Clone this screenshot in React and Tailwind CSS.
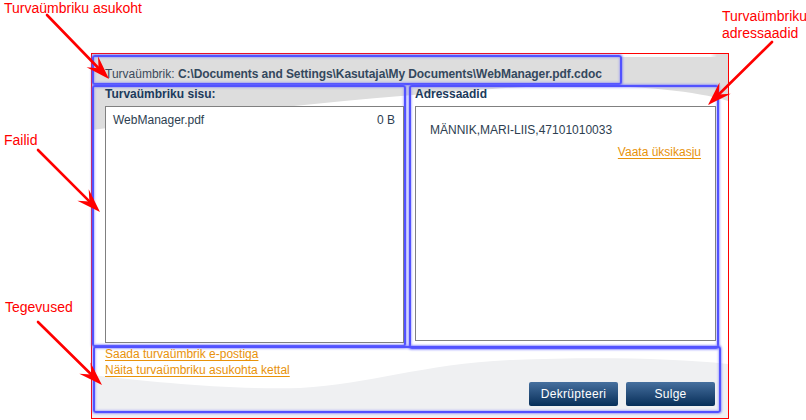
import React from "react";

const glow =
  "border-2 border-[#5252ff] rounded-[3px] shadow-[0_0_2px_1px_rgba(110,110,255,0.6),inset_0_0_2px_1px_rgba(110,110,255,0.45)]";

function Arrow({ x1, y1, x2, y2 }) {
  const dx = x2 - x1;
  const dy = y2 - y1;
  const len = Math.hypot(dx, dy);
  const ux = dx / len;
  const uy = dy / len;
  const px = -uy;
  const py = ux;
  const L = 24;
  const W = 8;
  const N = 15;
  const bx = x2 - L * ux;
  const by = y2 - L * uy;
  const nx = x2 - N * ux;
  const ny = y2 - N * uy;
  const pts = [
    [x2, y2],
    [bx + W * px, by + W * py],
    [nx, ny],
    [bx - W * px, by - W * py],
  ]
    .map((p) => p.join(","))
    .join(" ");
  return (
    <g>
      <line x1={x1} y1={y1} x2={nx} y2={ny} stroke="#ff0000" strokeWidth="2.6" strokeLinecap="round" />
      <polygon points={pts} fill="#ff0000" />
    </g>
  );
}

export default function App() {
  return (
    <div
      className="relative w-[806px] h-[420px] bg-white overflow-hidden text-[12px] leading-[14px]"
      style={{ fontFamily: '"Liberation Sans", Arial, sans-serif' }}
    >
      {/* dialog frame */}
      <div className="ml-[91px] pt-[53px]">
        <div className="relative w-[638px] h-[366px] border border-[#ff0000] bg-white">
          <svg className="absolute inset-0" width="636" height="364" viewBox="0 0 636 364">
            <defs>
              <linearGradient id="topband" x1="0" y1="0" x2="1" y2="0">
                <stop offset="0" stopColor="#ffffff" stopOpacity="0" />
                <stop offset="0.5" stopColor="#ffffff" stopOpacity="0.9" />
                <stop offset="0.98" stopColor="#ffffff" stopOpacity="0.9" />
                <stop offset="1" stopColor="#ffffff" stopOpacity="0" />
              </linearGradient>
            </defs>
            <path d="M0,0 H636 V47 C590,33 500,28 400,35 C270,44 130,58 0,76 Z" fill="#dddddd" />
            <rect x="300" y="0" width="325" height="3" fill="url(#topband)" />
            <path
              d="M0,321 C60,328 140,336 208,334 C280,330 330,310 420,306 C500,303 580,304 636,310 V364 H0 Z"
              fill="#eff0f2"
            />
          </svg>

          <div className="relative flex flex-col pt-[1px]">
            {/* path bar */}
            <div className={`${glow} w-[530px] h-[30px] pl-[11px] pt-[10px] text-[#3b4a5a] whitespace-nowrap`}>
              Turvaümbrik: <span className="font-bold tracking-[-0.08px] text-[#34485d]">C:\Documents and Settings\Kasutaja\My Documents\WebManager.pdf.cdoc</span>
            </div>

            <div className="flex items-start gap-[3px]">
              {/* files */}
              <div className={`${glow} w-[314px] h-[262px] flex flex-col`}>
                <div className="pl-[11px] font-bold text-[#1b3a5c]">Turvaümbriku sisu:</div>
                <div className="ml-[11px] mt-[5px] w-[299px] h-[237px] border border-[#808080] bg-white px-[7px] pt-[6px] text-[#2d3e50]">
                  <div className="flex justify-between pr-[1px]">
                    <span>WebManager.pdf</span>
                    <span>0 B</span>
                  </div>
                </div>
              </div>

              {/* recipients */}
              <div className={`${glow} w-[310px] h-[264px] flex flex-col`}>
                <div className="pl-[4px] font-bold text-[#1b3a5c]">Adressaadid</div>
                <div className="ml-[4px] mt-[5px] w-[301px] h-[235px] border border-[#808080] bg-white pl-[14px] pr-[14px] pt-[16px] text-[#2d3e50] flex flex-col">
                  <span>MÄNNIK,MARI-LIIS,47101010033</span>
                  <span className="self-end mt-[8px] text-[#e8920a] underline underline-offset-2">Vaata üksikasju</span>
                </div>
              </div>
            </div>

            {/* actions */}
            <div className={`${glow} ml-[1px] -mt-[3px] w-[628px] h-[67px] pl-[10px] pr-[4px] flex flex-col`}>
              <div className="-mt-[2px] flex flex-col leading-[16px] text-[#e8920a]">
                <span className="underline underline-offset-2 w-fit">Saada turvaümbrik e-postiga</span>
                <span className="underline underline-offset-2 w-fit">Näita turvaümbriku asukohta kettal</span>
              </div>
              <div className="mt-[4px] flex justify-end gap-[8px]">
                <button className="w-[89px] h-[24px] rounded-[2px] bg-gradient-to-b from-[#46709f] to-[#062f59] text-white text-[12px] tracking-[0.3px]">
                  Dekrüpteeri
                </button>
                <button className="w-[89px] h-[24px] rounded-[2px] bg-gradient-to-b from-[#46709f] to-[#062f59] text-white text-[12px] tracking-[0.3px]">
                  Sulge
                </button>
              </div>
            </div>
          </div>
        </div>
      </div>

      {/* annotations */}
      <div className="absolute left-[4px] top-[0px] text-[14px] leading-[16px] text-[#ff0000]">Turvaümbriku asukoht</div>
      <div className="absolute left-[722px] top-[8px] text-[14px] leading-[17px] text-[#ff0000]">
        Turvaümbriku
        <br />
        adressaadid
      </div>
      <div className="absolute left-[4px] top-[132px] text-[14px] leading-[16px] text-[#ff0000]">Failid</div>
      <div className="absolute left-[5px] top-[299px] text-[14px] leading-[16px] text-[#ff0000]">Tegevused</div>

      <svg className="absolute inset-0 pointer-events-none" width="806" height="420" viewBox="0 0 806 420">
        <Arrow x1={47} y1={15} x2={109} y2={79} />
        <Arrow x1={772} y1={42} x2={708} y2={105} />
        <Arrow x1={38} y1={150} x2={100} y2={212} />
        <Arrow x1={38} y1={322} x2={102} y2={385} />
      </svg>
    </div>
  );
}
